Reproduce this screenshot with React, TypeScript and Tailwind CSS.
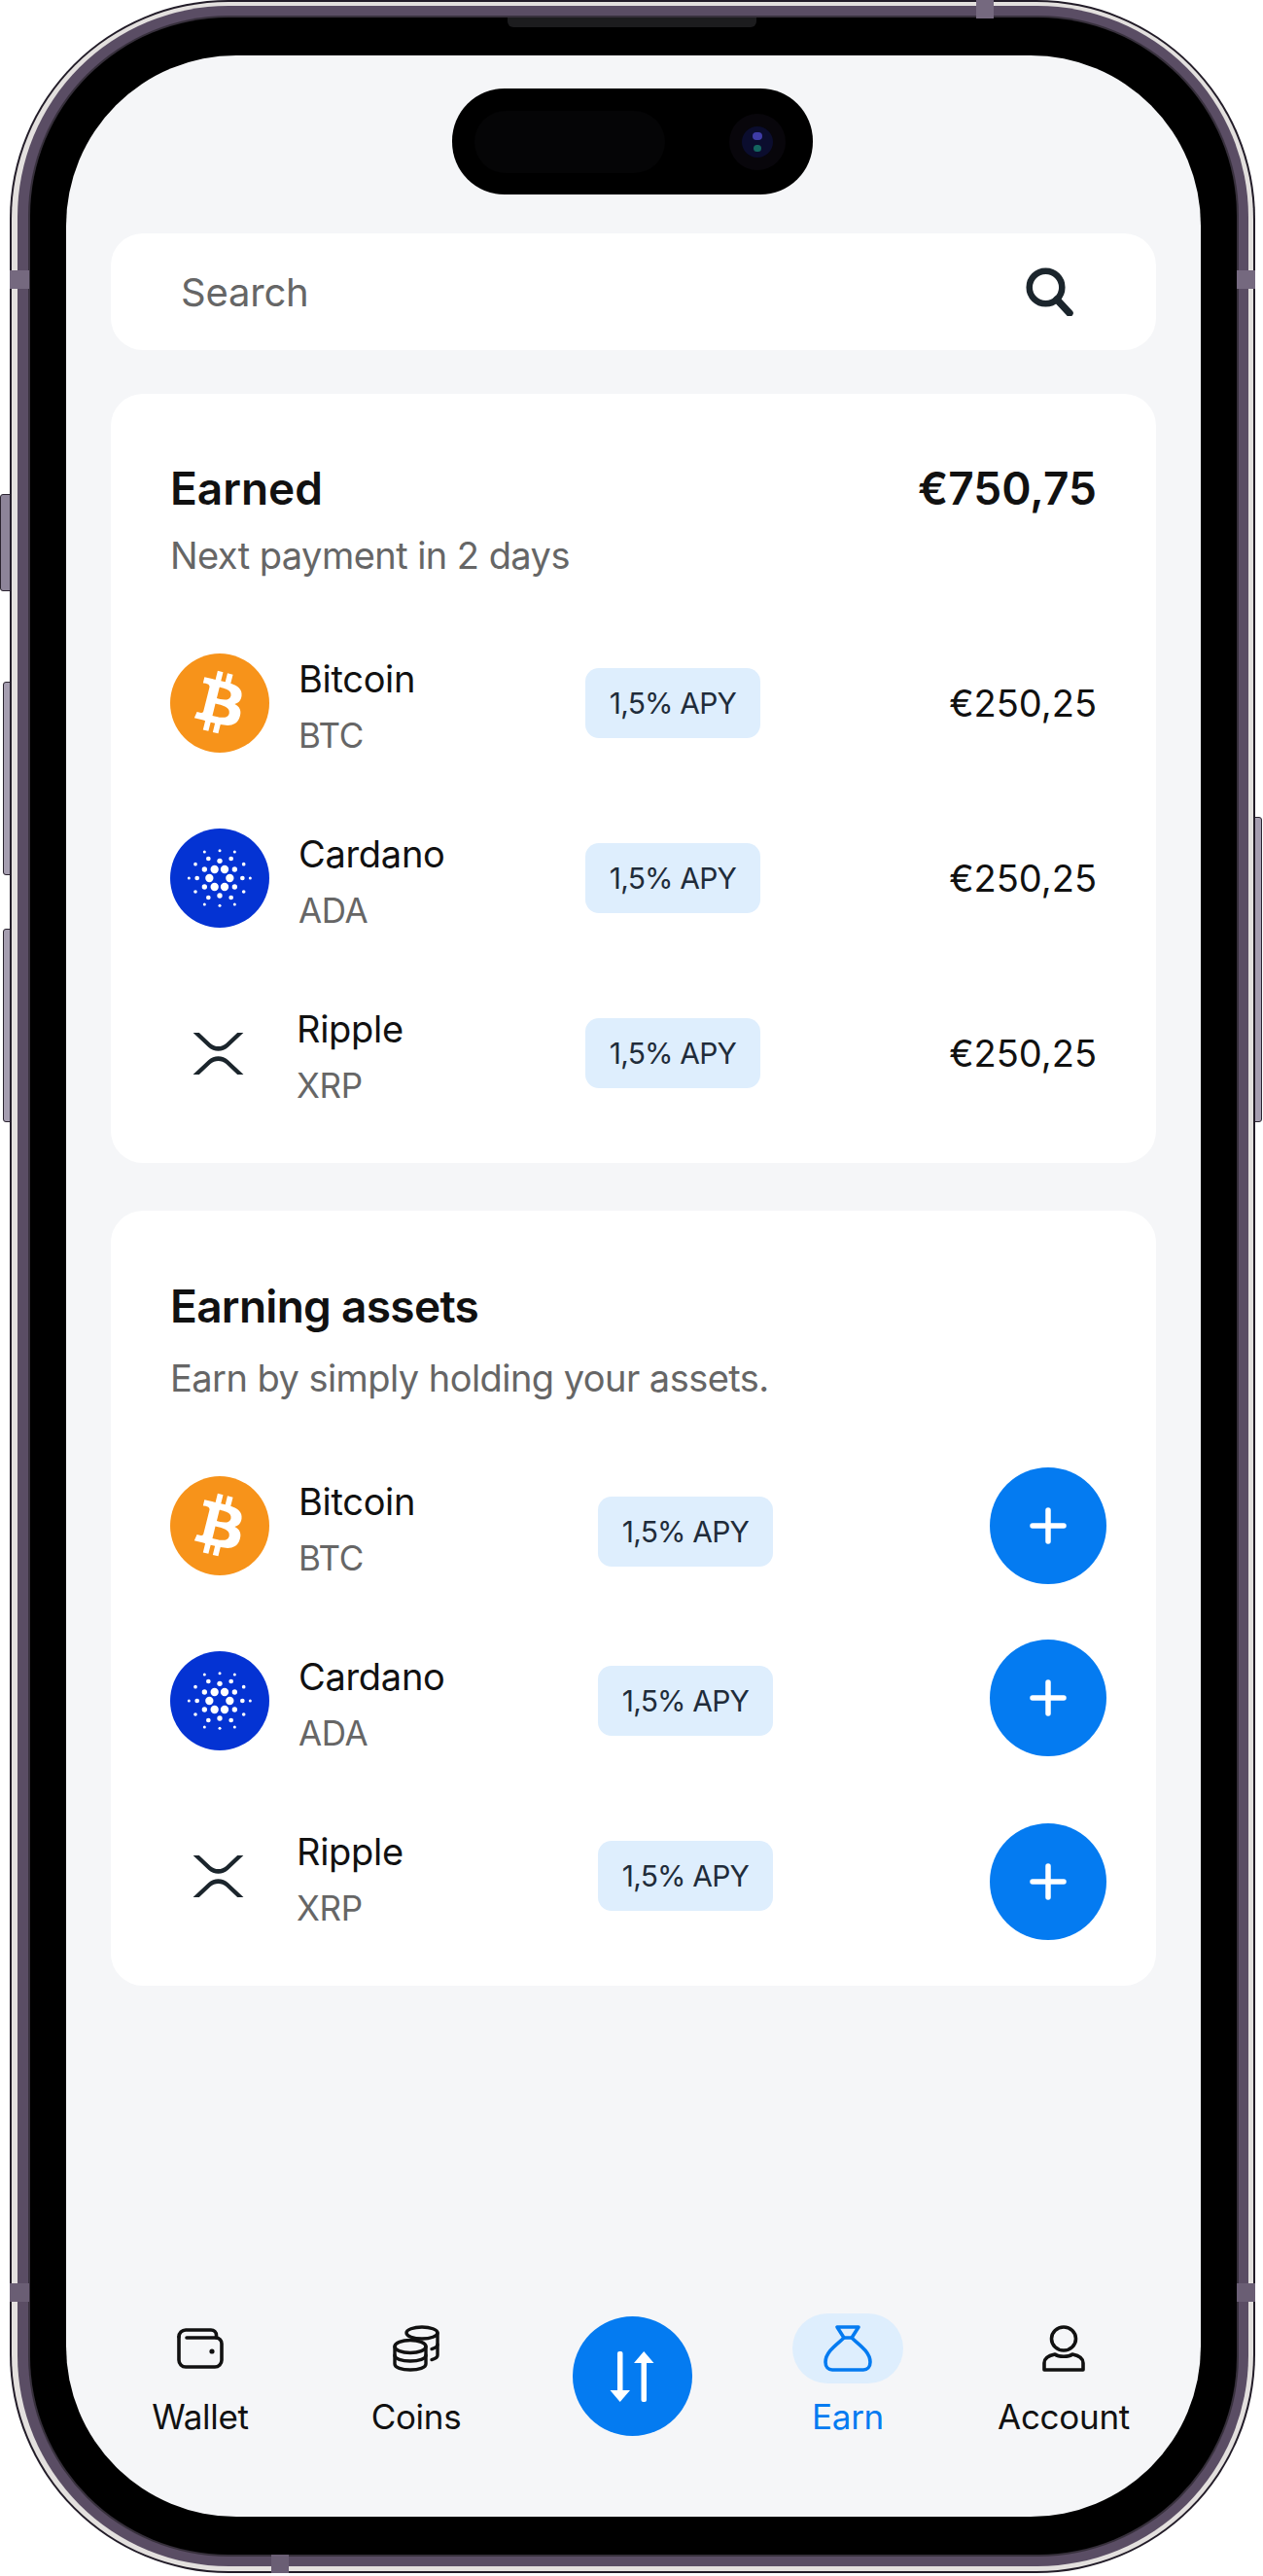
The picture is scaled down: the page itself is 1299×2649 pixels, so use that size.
import React from 'react';

const BLUE = '#047bf1';

const cardanoDots: [number, number, number][] = [
  [-16, -27, 12.5], [15, -27, 12.5], [-32, 0, 12.5], [31, 0, 12.5], [-16, 27, 12.5], [15, 27, 12.5],
  [-47, -27, 8], [46, -27, 8], [0, -53, 8], [0, 54, 8], [-47, 27, 8], [46, 27, 8],
  [-70, 0, 7], [70, 0, 7], [-35, -60, 7], [35, -60, 7], [-35, 60, 7], [35, 60, 7],
  [-75, -43, 5.5], [74, -43, 5.5], [-75, 42, 5.5], [74, 42, 5.5],
  [-95, 0, 4.5], [94, 0, 4.5],
  [-47, -81, 4.5], [0, -85, 4.5], [46, -81, 4.5], [-47, 81, 4.5], [0, 85, 4.5], [46, 81, 4.5],
];

function BitcoinLogo() {
  return (
    <svg className="w-[102px] h-[102px]" viewBox="0 0 64 64">
      <circle cx="32" cy="32" r="32" fill="#f7931a" />
      <path
        fill="#fff"
        d="M46.11 27.441c.636-4.258-2.606-6.547-7.039-8.074l1.438-5.768-3.512-.875-1.4 5.616c-.922-.23-1.87-.447-2.812-.662l1.41-5.653-3.509-.875-1.439 5.766c-.764-.174-1.514-.346-2.242-.527l.004-.018-4.842-1.209-.934 3.75s2.605.597 2.55.634c1.422.355 1.68 1.296 1.636 2.042l-1.638 6.57c.098.025.225.061.365.117l-.37-.092-2.297 9.205c-.174.432-.615 1.08-1.609.834.035.051-2.552-.637-2.552-.637l-1.743 4.02 4.57 1.139c.85.213 1.683.436 2.502.646l-1.453 5.835 3.507.875 1.44-5.772c.957.26 1.887.5 2.797.726L27.504 50.8l3.511.875 1.453-5.823c5.987 1.133 10.49.676 12.383-4.738 1.527-4.36-.075-6.875-3.225-8.516 2.294-.531 4.022-2.04 4.483-5.157zM38.087 38.69c-1.086 4.36-8.426 2.004-10.807 1.412l1.928-7.729c2.38.594 10.011 1.77 8.88 6.317zm1.085-11.312c-.99 3.966-7.1 1.951-9.083 1.457l1.748-7.01c1.983.494 8.367 1.416 7.335 5.553z"
      />
    </svg>
  );
}

function CardanoLogo() {
  return (
    <svg className="w-[102px] h-[102px]" viewBox="0 0 102 102">
      <circle cx="51" cy="51" r="51" fill="#0433d3" />
      {cardanoDots.map(([x, y, r], i) => (
        <circle key={i} cx={51 + x / 3} cy={51 + y / 3} r={r / 3} fill="#fff" />
      ))}
    </svg>
  );
}

function RippleLogo() {
  return (
    <svg className="w-[53px] h-[43px] -ml-[3px]" viewBox="0 0 512 424" fill="#1b252c">
      <path d="M450 0h61L357 145c-56 52-146 52-202 0L.94 0H62l115 108c44 41 114 41 158 0Z" />
      <path d="M62 424H0l155-145c56-52 146-52 202 0l155 145h-62L335 316c-44-41-114-41-158 0Z" />
    </svg>
  );
}

const coins = [
  { name: 'Bitcoin', symbol: 'BTC', logo: <BitcoinLogo />, textClass: 'w-[325px] pl-[30px]', textClass2: 'w-[338px] pl-[30px]' },
  { name: 'Cardano', symbol: 'ADA', logo: <CardanoLogo />, textClass: 'w-[325px] pl-[30px]', textClass2: 'w-[338px] pl-[30px]' },
  { name: 'Ripple', symbol: 'XRP', logo: <RippleLogo />, textClass: 'w-[325px] pl-[28px]', textClass2: 'w-[338px] pl-[28px]' },
];

function CoinName({ name, symbol }: { name: string; symbol: string }) {
  return (
    <div className="pt-[8px]">
      <div className="text-[38px] leading-[50px] tracking-[-0.3px] text-[#111111]">{name}</div>
      <div className="text-[35px] leading-[50px] mt-[8px] tracking-[-0.3px] text-[#666666]">{symbol}</div>
    </div>
  );
}

function Badge({ className = '' }: { className?: string }) {
  return (
    <div className={`w-[180px] h-[72px] rounded-[14px] bg-[#deeefd] flex items-center justify-center text-[30px] tracking-[-0.8px] text-[#1f2c3a] shrink-0 ${className}`}>
      1,5% APY
    </div>
  );
}

function AddButton({ className = '' }: { className?: string }) {
  return (
    <div className={`w-[120px] h-[120px] rounded-full bg-[#047bf1] flex items-center justify-center shrink-0 ${className}`}>
      <svg className="w-[38px] h-[38px]" viewBox="0 0 38 38" fill="none" stroke="#fff" strokeWidth="5.5" strokeLinecap="round">
        <path d="M19 3v32M3 19h32" />
      </svg>
    </div>
  );
}

function WalletIcon() {
  return (
    <svg className="w-[48px] h-[42px]" viewBox="0 0 48 42" fill="none" stroke="#111" strokeWidth="3.6" strokeLinecap="round" strokeLinejoin="round">
      <path d="M2 9V33a7 7 0 0 0 7 7H39a7 7 0 0 0 7-7V16a6 6 0 0 0-6-6H10" />
      <path d="M2 9a7 7 0 0 1 7-7H35a5.5 5.5 0 0 1 5.5 5.5V10" />
      <circle cx="36" cy="24" r="2.6" fill="#111" stroke="none" />
    </svg>
  );
}

function CoinsIcon() {
  return (
    <svg className="w-[48px] h-[48px]" viewBox="0 0 48 48" fill="none" stroke="#111" strokeWidth="3.4" strokeLinecap="round" strokeLinejoin="round">
      <ellipse cx="30" cy="8" rx="16" ry="6" />
      <path d="M46 8V31c0 2-2 3.5-6 4.6" />
      <path d="M46 20c0 2-2 3.5-6 4.6" />
      <ellipse cx="18" cy="22" rx="16" ry="6.5" fill="#f5f6f8" />
      <path d="M2 22V40c0 3.6 7 6 16 6s16-2.4 16-6V22" />
      <path d="M2 31c0 3.6 7 6 16 6s16-2.4 16-6" />
    </svg>
  );
}

function BagIcon() {
  return (
    <svg className="w-[50px] h-[48px]" viewBox="0 0 50 48" fill="none" stroke={BLUE} strokeWidth="3.6" strokeLinecap="round" strokeLinejoin="round">
      <path d="M14 2H36L29 13H21Z" />
      <path d="M21 13C15 19 2 27 2 38C2 43 5 46 9 46H41C45 46 48 43 48 38C48 27 35 19 29 13" />
    </svg>
  );
}

function AccountIcon() {
  return (
    <svg className="w-[44px] h-[48px]" viewBox="0 0 44 48" fill="none" stroke="#111" strokeWidth="3.6" strokeLinejoin="round">
      <ellipse cx="22" cy="14" rx="12.5" ry="12" />
      <path d="M2 46V39C2 33 8 31 13 30C17 33 27 33 31 30C36 31 42 33 42 39V46Z" />
    </svg>
  );
}

function NavItem({ label, active, icon }: { label: string; active?: boolean; icon: React.ReactNode }) {
  return (
    <div className="flex flex-col items-center">
      <div className={`w-[114px] h-[72px] rounded-[36px] flex items-center justify-center ${active ? 'bg-[#deeefd]' : ''}`}>
        {icon}
      </div>
      <div className={`mt-[14px] text-[35px] leading-[40px] tracking-[-0.3px] ${active ? 'text-[#047bf1]' : 'text-[#111111]'}`}>{label}</div>
    </div>
  );
}

export default function App() {
  return (
    <div className="relative w-[1299px] h-[2649px] bg-white font-[Inter,sans-serif] pl-[10px] pr-[8px]">
      {/* side buttons */}
      <div className="absolute left-0 top-[508px] w-[11px] h-[100px] rounded-l-[3px] bg-[#8d8499] border border-[#2b2430]" />
      <div className="absolute left-[3px] top-[701px] w-[8px] h-[199px] rounded-l-[3px] bg-[#a59db0] border border-[#2b2430]" />
      <div className="absolute left-[3px] top-[955px] w-[8px] h-[199px] rounded-l-[3px] bg-[#a59db0] border border-[#2b2430]" />
      <div className="absolute left-[1290px] top-[840px] w-[8px] h-[314px] rounded-r-[3px] bg-[#a59db0] border border-[#2b2430]" />

      {/* phone body */}
      <div className="relative w-[1281px] h-[2646px] rounded-[225px] bg-[#221c28] p-[2px]">
        <div className="w-full h-full rounded-[223px] bg-[#e3e0de] pl-[6px] pr-[5px] pt-[4px] pb-[5px]">
          <div className="w-full h-full rounded-[217px] bg-[#5a4d64] pl-[11px] pr-[10px] pt-[10px] pb-[10px]">
            <div className="w-full h-full rounded-[206px] bg-[#37303c] p-[2px]">
              <div className="w-full h-full rounded-[204px] bg-black pl-[37px] pr-[37px] pt-[39px] pb-[39px]">
                {/* screen */}
                <div className="relative w-full h-full rounded-[175px] bg-[#f5f6f8] flex flex-col px-[46px] pt-[183px] overflow-hidden">
                  {/* dynamic island */}
                  <div className="absolute left-[397px] top-[34px] w-[371px] h-[109px] rounded-[54px] bg-black flex items-center">
                    <div className="ml-[23px] w-[196px] h-[64px] rounded-[32px] bg-[#050506]" />
                    <div className="ml-[66px] w-[58px] h-[58px] rounded-full bg-[#08060b] flex items-center justify-center">
                      <div className="relative w-[32px] h-[32px] rounded-full bg-[#0b0d2e]">
                        <div className="absolute left-[11px] top-[6px] w-[10px] h-[8px] rounded-full bg-[#3f3ca6]" />
                        <div className="absolute left-[12px] top-[19px] w-[8px] h-[7px] rounded-full bg-[#14655f]" />
                      </div>
                    </div>
                  </div>

                  {/* search */}
                  <div className="h-[120px] rounded-[33px] bg-white flex items-center justify-between pl-[72px] pr-[84px] shrink-0">
                    <span className="pt-[1px] text-[40px] tracking-[-0.2px] text-[#666666]">Search</span>
                    <svg className="w-[50px] h-[50px]" viewBox="0 0 50 50" fill="none" stroke="#1b252c">
                      <circle cx="20.5" cy="20.5" r="16.8" strokeWidth="6.5" />
                      <path d="M32 33L45 47" strokeWidth="7.5" strokeLinecap="round" />
                    </svg>
                  </div>

                  {/* earned */}
                  <div className="mt-[45px] h-[791px] rounded-[33px] bg-white pl-[61px] pr-[61px] pt-[67px] shrink-0">
                    <div className="flex items-center justify-between h-[60px] text-[46px] font-semibold text-[#111111]">
                      <span>Earned</span>
                      <span>€750,75</span>
                    </div>
                    <div className="mt-[14px] text-[38px] leading-[50px] tracking-[-0.55px] text-[#666666]">Next payment in 2 days</div>
                    <div className="mt-[67px] flex flex-col gap-[60px]">
                      {coins.map((c) => (
                        <div key={c.name} className="h-[120px] flex items-center">
                          <div className="w-[102px] h-[102px] flex items-center justify-center shrink-0">{c.logo}</div>
                          <div className={c.textClass}>
                            <CoinName name={c.name} symbol={c.symbol} />
                          </div>
                          <Badge />
                          <div className="flex-1 text-right text-[38px] text-[#111111]">€250,25</div>
                        </div>
                      ))}
                    </div>
                  </div>

                  {/* earning assets */}
                  <div className="mt-[49px] h-[797px] rounded-[33px] bg-white pl-[61px] pr-[51px] pt-[68px] shrink-0">
                    <div className="h-[60px] flex items-center text-[46px] font-semibold tracking-[-0.7px] text-[#111111]">Earning assets</div>
                    <div className="mt-[19px] text-[38px] leading-[50px] tracking-[-0.55px] text-[#666666]">Earn by simply holding your assets.</div>
                    <div className="mt-[67px] flex flex-col gap-[60px]">
                      {coins.map((c, i) => (
                        <div key={c.name} className="h-[120px] flex items-center">
                          <div className="w-[102px] h-[102px] flex items-center justify-center shrink-0">{c.logo}</div>
                          <div className={c.textClass2}>
                            <CoinName name={c.name} symbol={c.symbol} />
                          </div>
                          <Badge className={i === 0 ? 'mt-[12px]' : ''} />
                          <div className="flex-1" />
                          <AddButton className={i === 1 ? 'mt-[-6px]' : i === 2 ? 'mt-[12px]' : ''} />
                        </div>
                      ))}
                    </div>
                  </div>

                  {/* bottom nav */}
                  <div className="mt-auto mb-[83px] -mx-[46px] pl-[27px] pr-[30px] grid grid-cols-5">
                    <NavItem label="Wallet" icon={<WalletIcon />} />
                    <NavItem label="Coins" icon={<CoinsIcon />} />
                    <div className="flex justify-center pt-[3px]">
                      <div className="w-[123px] h-[123px] rounded-full bg-[#047bf1] flex items-center justify-center">
                        <svg className="w-[48px] h-[54px]" viewBox="0 0 48 54" fill="#fff">
                          <rect x="9" y="1" width="5.5" height="44" rx="2" />
                          <path d="M1.5 41H22L11.7 53Z" />
                          <rect x="33.5" y="9" width="5.5" height="44" rx="2" />
                          <path d="M26 13H46.5L36.2 1Z" />
                        </svg>
                      </div>
                    </div>
                    <NavItem label="Earn" active icon={<BagIcon />} />
                    <NavItem label="Account" icon={<AccountIcon />} />
                  </div>
                </div>
              </div>
            </div>
          </div>
        </div>

        {/* speaker */}
        <div className="absolute left-[512px] top-[18px] w-[256px] h-[10px] rounded-b-[6px] bg-[#1c1c1e]" />

        {/* antenna bands */}
        <div className="absolute left-[994px] top-0 w-[18px] h-[19px] bg-[#75697f]" />
        <div className="absolute left-[269px] bottom-0 w-[18px] h-[19px] bg-[#6a5e74]" />
        <div className="absolute left-0 top-[278px] w-[20px] h-[19px] bg-[#75697f]" />
        <div className="absolute right-0 top-[278px] w-[19px] h-[19px] bg-[#75697f]" />
        <div className="absolute left-0 top-[2348px] w-[20px] h-[19px] bg-[#6a5e74]" />
        <div className="absolute right-0 top-[2348px] w-[19px] h-[19px] bg-[#6a5e74]" />
      </div>
    </div>
  );
}
